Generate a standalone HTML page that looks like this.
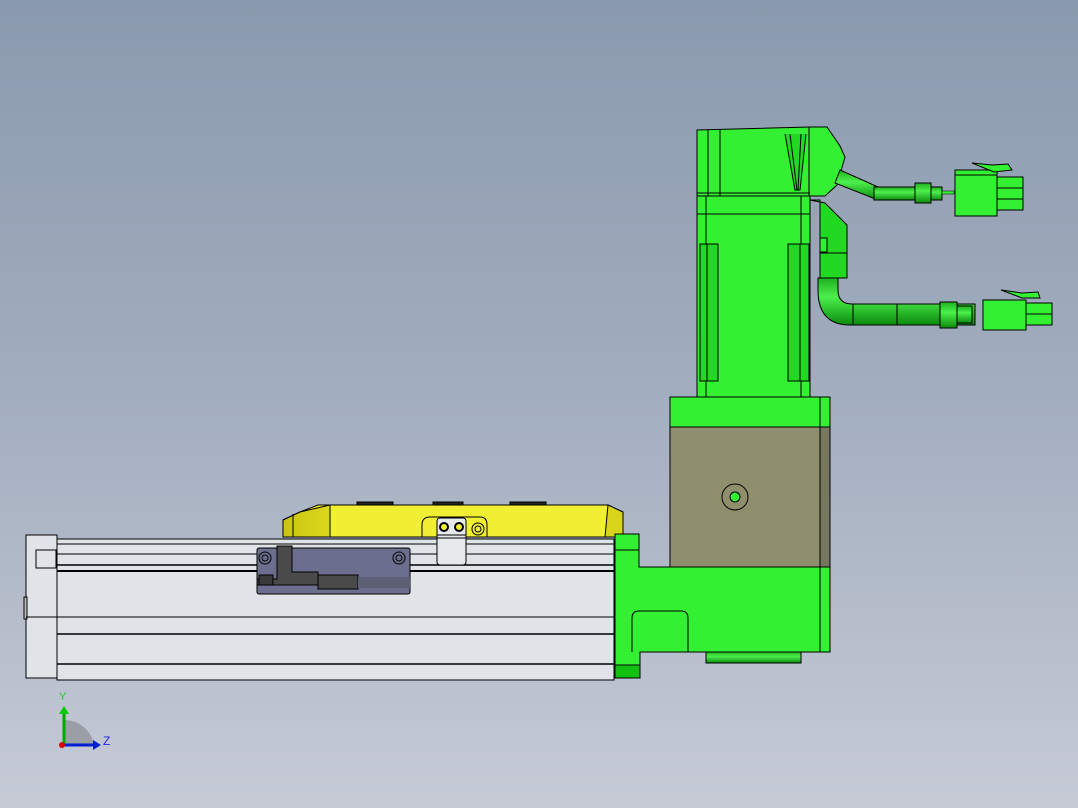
<!DOCTYPE html>
<html><head><meta charset="utf-8"><style>
html,body{margin:0;padding:0;width:1078px;height:808px;overflow:hidden}
body{background:linear-gradient(#8a9aae 0%,#a3aebf 50%,#c6cbd6 100%)}
svg{position:absolute;left:0;top:0}
text{font-family:"Liberation Sans",sans-serif}
</style></head><body>
<svg width="1078" height="808" viewBox="0 0 1078 808" stroke="#000" stroke-width="1">
<defs>
<linearGradient id="pipe" x1="0" y1="0" x2="0" y2="1"><stop offset="0" stop-color="#1fb01f"/><stop offset=".4" stop-color="#4cf04c"/><stop offset="1" stop-color="#0c8a0c"/></linearGradient>
<linearGradient id="yel" x1="0" y1="0" x2="1" y2="0"><stop offset="0" stop-color="#c9c40e"/><stop offset="1" stop-color="#dcd820"/></linearGradient>
</defs>
<rect x="26" y="535" width="31" height="143" fill="#e0e3e7"/>
<rect x="36" y="550" width="20" height="18" fill="#e0e3e7"/>
<rect x="24" y="597" width="3" height="22" fill="#bbb"/>
<rect x="57" y="539" width="557" height="141" fill="#e0e3e7"/>
<line x1="57" y1="544" x2="614" y2="544"/>
<line x1="57" y1="554" x2="614" y2="554"/>
<line x1="57" y1="565" x2="614" y2="565" stroke-width="1.5"/>
<line x1="57" y1="571" x2="614" y2="571" stroke-width="2"/>
<line x1="57" y1="617" x2="614" y2="617"/>
<line x1="57" y1="634" x2="614" y2="634" stroke-width="1.5"/>
<line x1="57" y1="664" x2="614" y2="664" stroke-width="1.5"/>
<line x1="26" y1="617" x2="57" y2="617"/>
<path d="M283 520 L300 512 L318 505 L608 505 L623 512 L623 537 L283 537 Z" fill="#f0ef33"/>
<path d="M283 520 L300 512 L330 505 L330 537 L283 537 Z" fill="url(#yel)"/>
<path d="M608 505 L623 512 L623 537 L605 537 Z" fill="#d8d41a"/>
<line x1="293" y1="514" x2="293" y2="537"/>
<rect x="357" y="502" width="36" height="3" fill="#222"/>
<rect x="433" y="502" width="30" height="3" fill="#222"/>
<rect x="510" y="502" width="36" height="3" fill="#222"/>
<path d="M422 537 L422 525 Q422 517 430 517 L480 517 Q487 517 487 525 L487 537" fill="none"/>
<rect x="437" y="518" width="29" height="47" rx="3" fill="#e6e8ec"/>
<line x1="437" y1="535" x2="466" y2="535"/><line x1="437" y1="538" x2="466" y2="538"/>
<circle cx="444" cy="527" r="4" fill="#f0ef33" stroke-width="2"/>
<circle cx="459" cy="527" r="4" fill="#f0ef33" stroke-width="2"/>
<circle cx="478" cy="529" r="6" fill="#f0ef33"/><circle cx="478" cy="529" r="3" fill="none"/>
<rect x="257" y="548" width="153" height="46" rx="2" fill="#6c6e8e"/>
<path d="M277 546 L292 546 L292 572 L318 572 L318 585 L257 585 L257 579 L277 579 Z" fill="#4a4a4a"/>
<rect x="318" y="575" width="40" height="14" fill="#4a4a4a"/>
<rect x="259" y="575" width="14" height="10" fill="#3a3a3a"/>
<rect x="358" y="577" width="52" height="11" fill="#5d5f75" stroke="none"/>
<circle cx="265" cy="558" r="6" fill="none"/><circle cx="265" cy="558" r="3" fill="none"/>
<circle cx="399" cy="558" r="6" fill="none"/><circle cx="399" cy="558" r="3" fill="none"/>
<path d="M615 534 L639 534 L639 567 L670 567 L670 397 L830 397 L830 652 L640 652 L640 678 L615 678 Z" fill="#33f033"/>
<rect x="670" y="427" width="150" height="140" fill="#8f8f6e"/>
<rect x="820" y="427" width="10" height="140" fill="#777760"/>
<line x1="820" y1="397" x2="820" y2="652"/>
<line x1="670" y1="427" x2="830" y2="427"/>
<line x1="670" y1="567" x2="830" y2="567"/>
<line x1="615" y1="550" x2="639" y2="550"/>
<rect x="615" y="665" width="25" height="13" fill="#11c011"/>
<path d="M632 652 L632 618 Q632 611 639 611 L681 611 Q688 611 688 618 L688 652" fill="none"/>
<circle cx="735" cy="497" r="13" fill="none"/>
<circle cx="735" cy="497" r="5" fill="#33f033"/>
<rect x="706" y="652" width="95" height="11" fill="url(#pipe)"/>
<rect x="697" y="196" width="113" height="201" fill="#33f033"/>
<line x1="697" y1="214" x2="810" y2="214"/>
<line x1="706" y1="196" x2="706" y2="397"/>
<line x1="801" y1="196" x2="801" y2="397"/>
<rect x="700" y="244" width="18" height="137" fill="#22d822"/>
<line x1="707" y1="244" x2="707" y2="381"/>
<rect x="788" y="244" width="21" height="137" fill="#22d822"/>
<line x1="800" y1="244" x2="800" y2="381"/>
<path d="M697 130 L810 127 L827 127 L840 146 L845 157 L837 185 L825 196 L697 196 Z" fill="#33f033"/>
<line x1="697" y1="193" x2="810" y2="193"/>
<line x1="720" y1="130" x2="720" y2="196"/>
<line x1="708" y1="130" x2="708" y2="196"/>
<line x1="809" y1="127" x2="809" y2="196"/>
<path d="M785 134 L795 190 L800 190 L806 134" fill="#22d822"/>
<path d="M790 134 L797 190 M801 134 L798 190"/>
<path d="M840 170 L878 187 L878 200 L835 183 Z" fill="url(#pipe)"/>
<rect x="874" y="187" width="42" height="13" fill="url(#pipe)"/>
<rect x="915" y="183" width="16" height="20" fill="url(#pipe)"/>
<rect x="931" y="187" width="11" height="13" fill="url(#pipe)"/>
<rect x="942" y="191" width="12" height="3" fill="#33f033" stroke-width=".5"/>
<rect x="955" y="170" width="42" height="46" fill="#33f033"/>
<line x1="955" y1="175" x2="997" y2="175"/>
<rect x="997" y="177" width="26" height="11" fill="#33f033"/>
<rect x="997" y="188" width="26" height="11" fill="#33f033"/>
<rect x="997" y="199" width="26" height="11" fill="#33f033"/>
<path d="M972 163 L992 165 L1008 164 L1012 170 L994 172 Z" fill="#33f033"/>
<path d="M810 200 L825 203 L847 225 L847 278 L820 278 L820 200 Z" fill="#22d822"/>
<line x1="820" y1="253" x2="847" y2="253"/>
<rect x="820" y="238" width="7" height="14" fill="#33f033"/>
<path d="M818 278 L838 278 L838 290 Q838 304 852 304 L975 304 L975 325 L850 325 Q818 325 818 290 Z" fill="url(#pipe)"/>
<line x1="853" y1="304" x2="853" y2="325"/><line x1="897" y1="304" x2="897" y2="325"/>
<rect x="940" y="302" width="17" height="26" fill="url(#pipe)"/>
<rect x="957" y="306" width="15" height="17" fill="url(#pipe)"/>
<rect x="983" y="300" width="43" height="30" fill="#33f033"/>
<rect x="1026" y="303" width="26" height="11" fill="#33f033"/>
<rect x="1026" y="314" width="26" height="11" fill="#33f033"/>
<path d="M1001 290 L1022 293 L1038 292 L1040 298 L1022 298 Z" fill="#33f033"/>
<path d="M64 745 L64 720 A30 30 0 0 1 94 745 Z" fill="#9a9ea6" stroke="none"/>
<line x1="64" y1="745" x2="64" y2="712" stroke="#0a0" stroke-width="3"/>
<path d="M59 714 L64 706 L69 714 Z" fill="#0c0" stroke="none"/>
<line x1="64" y1="745" x2="95" y2="745" stroke="#0020d0" stroke-width="3"/>
<path d="M93 740 L101 745 L93 750 Z" fill="#0020d0" stroke="none"/>
<circle cx="62" cy="745" r="3" fill="#d00" stroke="none"/>
<text x="59" y="700" font-size="11" fill="#2c2" stroke="none">Y</text>
<text x="103" y="745" font-size="12" fill="#22e" stroke="none">Z</text>
</svg>
</body></html>
